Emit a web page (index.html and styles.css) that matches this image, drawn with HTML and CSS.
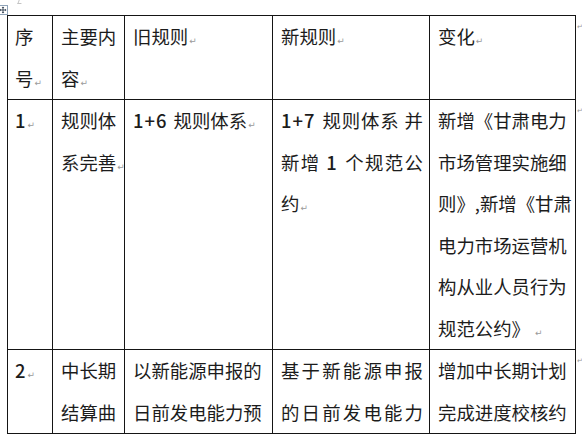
FILE: index.html
```html
<!DOCTYPE html>
<html lang="zh-CN">
<head>
<meta charset="utf-8">
<title>规则对比</title>
<link rel="stylesheet" href="styles.css">
</head>
<body>
<div class="top">
  <svg class="handle" width="10" height="10" viewBox="0 0 10 10" aria-hidden="true">
    <rect x="0.5" y="0.5" width="9" height="9" fill="#fff" stroke="#8fa3b8"/>
    <path d="M5 2v6M2 5h6" stroke="#3c4a5a" stroke-width="1"/>
    <path d="M5 1.5l-1.3 1.4h2.6zM5 8.5l-1.3-1.4h2.6zM1.5 5l1.4-1.3v2.6zM8.5 5l-1.4-1.3v2.6z" fill="#3c4a5a"/>
  </svg>
  <span class="topmark"></span>
</div>
<table class="rules">
  <colgroup>
    <col class="c1"><col class="c2"><col class="c3"><col class="c4"><col class="c5"><col class="c6">
  </colgroup>
  <tr class="r-head">
    <td><span class="ln">序</span><span class="ln">号<span class="pm">↵</span></span></td>
    <td><span class="ln">主要内</span><span class="ln">容<span class="pm">↵</span></span></td>
    <td><span class="ln">旧规则<span class="pm">↵</span></span></td>
    <td><span class="ln">新规则<span class="pm">↵</span></span></td>
    <td><span class="ln">变化<span class="pm">↵</span></span></td>
    <td class="rowend">↵</td>
  </tr>
  <tr class="r-one">
    <td><span class="ln num">1<span class="pm">↵</span></span></td>
    <td><span class="ln">规则体</span><span class="ln">系完善<span class="pm">↵</span></span></td>
    <td><span class="ln"><span class="num">1+6</span> 规则体系<span class="pm">↵</span></span></td>
    <td><span class="ln j"><span class="num">1+7</span> 规则体系 并</span><span class="ln j">新增 <span class="num">1</span> 个规范公</span><span class="ln">约<span class="pm">↵</span></span></td>
    <td><span class="ln">新增《甘肃电力</span><span class="ln">市场管理实施细</span><span class="ln">则》,新增《甘肃</span><span class="ln">电力市场运营机</span><span class="ln">构从业人员行为</span><span class="ln">规范公约》 <span class="pm">↵</span></span></td>
    <td class="rowend">↵</td>
  </tr>
  <tr class="r-two">
    <td><span class="ln num">2<span class="pm">↵</span></span></td>
    <td><span class="ln">中长期</span><span class="ln">结算曲</span></td>
    <td><span class="ln">以新能源申报的</span><span class="ln">日前发电能力预</span></td>
    <td><span class="ln j">基于新能源申报</span><span class="ln j">的日前发电能力</span></td>
    <td><span class="ln">增加中长期计划</span><span class="ln">完成进度校核约</span></td>
    <td class="rowend">↵</td>
  </tr>
</table>
</body>
</html>
```

FILE: styles.css
```css
html, body {
  margin: 0;
  padding: 0;
  background: #ffffff;
}

body {
  font-family: "Noto Sans CJK SC", "Noto Sans", sans-serif;
  color: #1c1c1c;
  overflow: hidden;
}

.top {
  height: 15px;
  position: relative;
}

.handle {
  display: block;
  position: absolute;
  left: -2px;
  top: 5px;
}

.topmark {
  position: absolute;
  left: 18px;
  top: 0;
  width: 3px;
  height: 3px;
  border-left: 1px solid #c4c4c4;
  border-bottom: 1px solid #c4c4c4;
  transform: skewX(-20deg);
}

.rules {
  border-collapse: collapse;
  table-layout: fixed;
  margin-left: 7px;
  width: 575px;
}

.c1 { width: 45px; }
.c2 { width: 72px; }
.c3 { width: 148px; }
.c4 { width: 157px; }
.c5 { width: 146px; }
.c6 { width: 7px; }

.rules td {
  border: 1px solid #151515;
  padding: 0 6px 0 8px;
  vertical-align: top;
  font-size: 18.4px;
  line-height: 41.5px;
  white-space: nowrap;
  overflow: visible;
}

.rules td:first-child {
  padding-left: 7px;
}

.rules td.rowend {
  border: none;
  padding: 6px 0 0 1px;
  font-family: "DejaVu Sans", sans-serif;
  font-size: 7px;
  line-height: 10px;
  color: #9a9a9a;
}

.ln {
  display: block;
  height: 41.5px;
}

.j {
  text-align: justify;
  text-align-last: justify;
}

.num {
  font-weight: 500;
  letter-spacing: 1px;
  margin-right: 2px;
}

.pm {
  font-family: "DejaVu Sans", sans-serif;
  font-size: 9px;
  font-weight: 400;
  line-height: 1;
  letter-spacing: 0;
  color: #9a9a9a;
  margin-left: 1px;
}
```
